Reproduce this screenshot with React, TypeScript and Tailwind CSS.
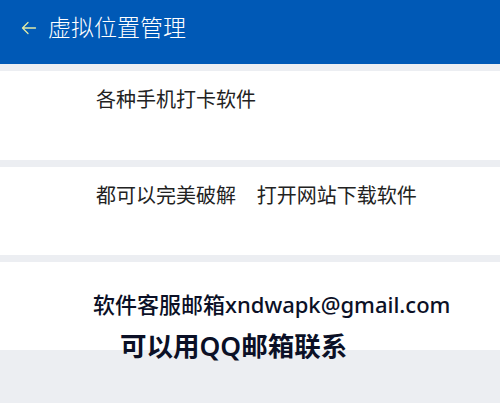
import React from "react";

const App = () => {
  return (
    <div
      className="w-[500px] h-[403px] bg-[#eceef2] overflow-hidden"
      style={{ fontFamily: '"Noto Sans", "Noto Sans CJK SC", sans-serif' }}
    >
      <header className="h-[64px] bg-[#0059b6] flex items-start pt-[10px] pl-[21px] gap-[11px]">
        <svg width="16" height="16" viewBox="0 0 16 16" className="mt-[10px]">
          <path
            d="M14.5 8H1.5M7 2.5L1.5 8 7 13.5"
            fill="none"
            stroke="#dfe9a8"
            strokeWidth="1.3"
            strokeLinecap="round"
            strokeLinejoin="round"
          />
        </svg>
        <h1 className="text-[23px] leading-[34px] text-white font-light">虚拟位置管理</h1>
      </header>

      <div className="mt-[7px] bg-white h-[89px] pl-[96px] pt-[16px]">
        <p className="text-[20px] leading-[26px] text-[#222]">各种手机打卡软件</p>
      </div>

      <div className="mt-[7px] bg-white h-[88px] pl-[96px] pt-[16px]">
        <p className="text-[20px] leading-[26px] text-[#222] whitespace-pre">
          都可以完美破解    打开网站下载软件
        </p>
      </div>

      <div className="mt-[7px] bg-white h-[88px] pt-[27px]">
        <p className="pl-[93px] text-[22px] leading-[30px] font-medium text-[#0b1026]">
          软件客服邮箱xndwapk@gmail.com
        </p>
        <p className="pl-[120px] mt-[11px] text-[26.5px] leading-[32px] font-semibold text-[#0b1026]">
          可以用QQ邮箱联系
        </p>
      </div>
    </div>
  );
};

export default App;
